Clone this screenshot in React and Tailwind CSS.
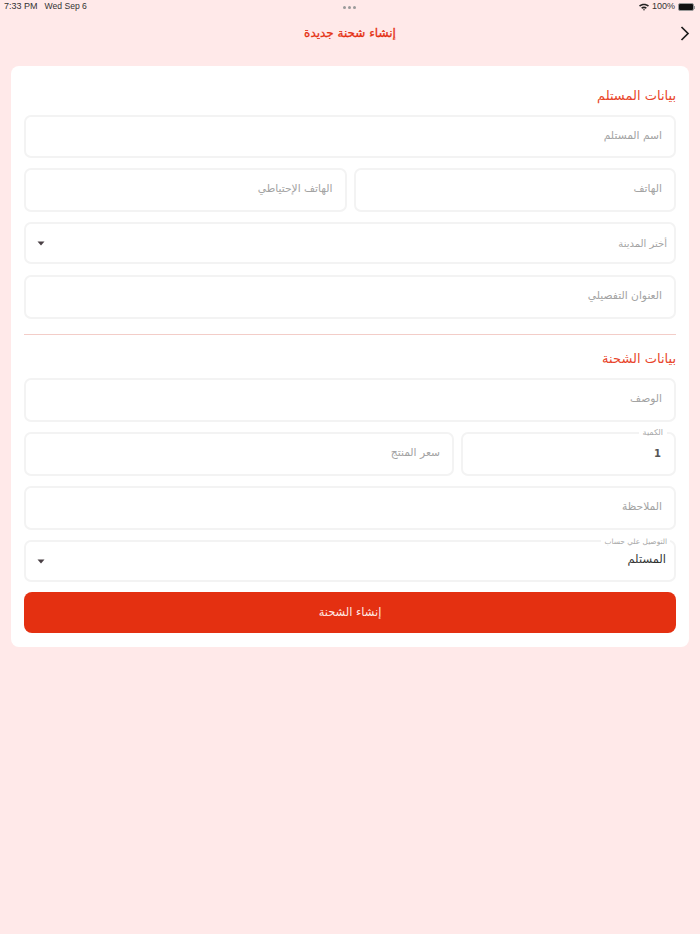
import React from "react";

const font = { fontFamily: '"DejaVu Sans", sans-serif' };

function Field({ placeholder, value, label, className = "", height = "h-[44px]" }) {
  return (
    <div className={`relative flex items-center rounded-[7px] border-2 border-[#f3f3f3] bg-white pr-[12px] ${height} ${className}`}>
      {label && (
        <span className="absolute -top-[6px] right-[7px] bg-white px-[4px] text-[8px] leading-[10px] text-[#a8a8a8]">
          {label}
        </span>
      )}
      {value ? (
        <span className="pb-[1px] pr-[1px] text-[10px] font-bold text-[#555555]">{value}</span>
      ) : (
        <span className="pb-[1px] text-[10.7px] text-[#a3a3a3]">{placeholder}</span>
      )}
    </div>
  );
}

function SelectField({ placeholder, value, label }) {
  return (
    <div className="relative flex h-[42px] items-center justify-between rounded-[7px] border-2 border-[#f3f3f3] bg-white pl-[11px] pr-[7px]">
      {label && (
        <span className="absolute -top-[5px] right-[4px] bg-white px-[3px] text-[7.4px] leading-[10px] text-[#a8a8a8]">
          {label}
        </span>
      )}
      {value ? (
        <span className="pb-[3px] pr-[1px] text-[11.5px] text-[#333333]">{value}</span>
      ) : (
        <span className="text-[10px] text-[#a3a3a3]">{placeholder}</span>
      )}
      <svg width="8" height="5" viewBox="0 0 8 5">
        <path d="M0.5 0.5h7L4 4.5z" fill="#4a4045" />
      </svg>
    </div>
  );
}

export default function App() {
  return (
    <div dir="rtl" style={font} className="min-h-[934px] bg-[#ffe9e9]">
      {/* status bar */}
      <div dir="ltr" className="flex h-[14px] items-center justify-between pl-[4px] pr-[5px] text-[9px] text-[#333333]" style={{ fontFamily: '"Liberation Sans", sans-serif' }}>
        <div className="flex w-[120px] gap-[7px]">
          <span>7:33 PM</span>
          <span className="text-[8.6px]">Wed Sep 6</span>
        </div>
        <div className="flex gap-[2px]">
          <span className="h-[3px] w-[3px] rounded-full bg-[#9a9a9a]"></span>
          <span className="h-[3px] w-[3px] rounded-full bg-[#9a9a9a]"></span>
          <span className="h-[3px] w-[3px] rounded-full bg-[#9a9a9a]"></span>
        </div>
        <div className="flex w-[120px] items-center justify-end gap-[3px]">
          <svg width="10" height="8" viewBox="0 0 10 8">
            <path d="M0 2.6C2.8 0 7.2 0 10 2.6L8.9 3.8C6.7 1.8 3.3 1.8 1.1 3.8z" fill="#222" />
            <path d="M2.1 4.7C3.8 3.2 6.2 3.2 7.9 4.7L6.8 5.8C5.7 4.9 4.3 4.9 3.2 5.8z" fill="#222" />
            <path d="M4 6.6C4.6 6.1 5.4 6.1 6 6.6L5 7.8z" fill="#222" />
          </svg>
          <span>100%</span>
          <div className="flex items-center">
            <div className="h-[8px] w-[16px] rounded-[2px] border border-[#999] bg-[#111]"></div>
            <div className="h-[3px] w-[1px] bg-[#999]"></div>
          </div>
        </div>
      </div>

      {/* header */}
      <div className="relative flex h-[38px] items-center justify-center">
        <h1 className="pb-[1px] text-[12px] font-normal text-[#e53012] [-webkit-text-stroke:0.3px_#e53012]">إنشاء شحنة جديدة</h1>
        <svg className="absolute right-[10px] top-[12px]" width="10" height="15" viewBox="0 0 10 15" fill="none">
          <path d="M1.5 1l6.5 6.5-6.5 6.5" stroke="#1c1c1c" strokeWidth="1.7" />
        </svg>
      </div>

      {/* card */}
      <div className="mx-[11px] mt-[14px] rounded-lg bg-white px-[13px] pb-[14px] pt-[21px]">
        <h2 className="mb-[11px] h-[17px] text-[13px] leading-[17px] text-[#e8452a]">بيانات المستلم</h2>
        <div className="flex flex-col gap-[10px]">
          <Field placeholder="اسم المستلم" height="h-[43px]" />
          <div className="flex gap-[7px]">
            <Field placeholder="الهاتف" className="flex-1" />
            <Field placeholder="الهاتف الإحتياطي" className="flex-1" />
          </div>
          <SelectField placeholder="أختر المدينة" />
          <Field placeholder="العنوان التفصيلي" className="mt-[1px]" />
        </div>

        <div className="my-[15px] h-[1px] bg-[#f3cdc8]"></div>

        <h2 className="mb-[11px] h-[17px] text-[13px] leading-[17px] text-[#e8452a]">بيانات الشحنة</h2>
        <div className="flex flex-col gap-[10px]">
          <Field placeholder="الوصف" />
          <div className="flex gap-[7px]">
            <Field value="1" label="الكمية" className="w-[215px] shrink-0" />
            <Field placeholder="سعر المنتج" className="flex-1" />
          </div>
          <Field placeholder="الملاحظة" />
          <SelectField value="المستلم" label="التوصيل علي حساب" />
        </div>
        <button className="mt-[10px] flex h-[41px] w-full items-center justify-center rounded-lg bg-[#e43011] text-[11.4px] text-[#ffe9e4]">
          إنشاء الشحنة
        </button>
      </div>
    </div>
  );
}
